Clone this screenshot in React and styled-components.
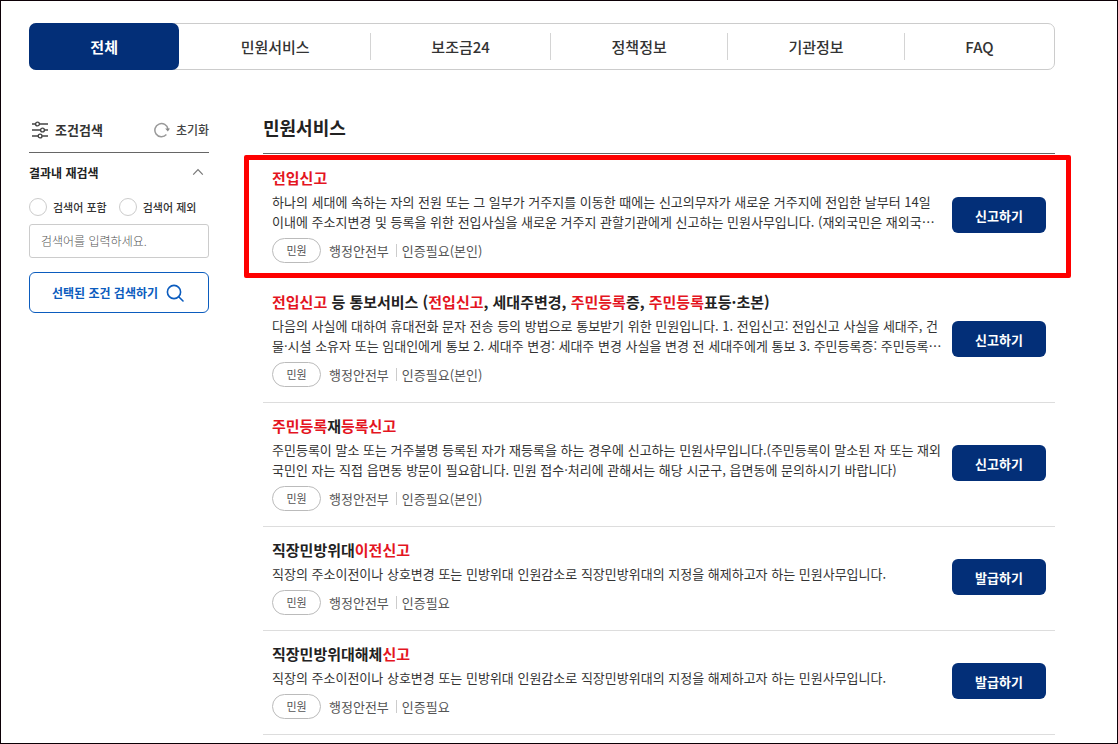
import React, { useState } from 'react';
import styled, { createGlobalStyle, css } from 'styled-components';

const GlobalStyle = createGlobalStyle`
  *, *::before, *::after {
    box-sizing: border-box;
  }

  body {
    margin: 0;
    background: #fff;
    color: #222;
    font-family: 'Noto Sans CJK KR', sans-serif;
  }

  button, input {
    font-family: inherit;
  }

  h1, h2, h3, p, ul {
    margin: 0;
    padding: 0;
  }

  ul {
    list-style: none;
  }
`

const Page = styled.div`
  min-height: 100vh;
  padding: 22px 62px 7px 28px;
  border: 1px solid #0c0006;
`

const TabList = styled.ul`
  display: flex;
  align-items: center;
  height: 47px;
  border: 1px solid #ccc;
  border-radius: 7px;
`

const TabItem = styled.li`
  flex: 1 1 auto;
  height: 27px;
  border-left: 1px solid ${({ $divided }) => ($divided ? '#d4d4d4' : 'transparent')};

  ${({ $active }) => $active && css`
    height: 47px;
    margin-left: -1px;
    border-left: 0;
  `}
`

const TabButton = styled.button`
  width: 100%;
  height: 100%;
  padding: 0 ${({ $active }) => ($active ? '1px' : '0')};
  border: 0;
  border-radius: 7px;
  background: ${({ $active }) => ($active ? '#032f78' : 'transparent')};
  color: ${({ $active }) => ($active ? '#fff' : '#333')};
  font-size: 15px;
  font-weight: ${({ $active }) => ($active ? 700 : 500)};
  cursor: pointer;
`

const Body = styled.div`
  display: flex;
  align-items: flex-start;
  gap: 54px;
  padding-top: 45px;
`

const Sidebar = styled.aside`
  flex: 0 0 180px;
`

const SidebarHead = styled.div`
  display: flex;
  align-items: center;
  justify-content: space-between;
  height: 38px;
  padding-bottom: 8px;
  border-bottom: 1px solid #666;
`

const SidebarTitle = styled.h2`
  display: flex;
  align-items: center;
  gap: 6px;
  padding-left: 2px;
  color: #333;
  font-size: 13px;
  font-weight: 700;
  line-height: 20px;
`

const ResetButton = styled.button`
  display: flex;
  align-items: center;
  gap: 6px;
  padding: 0;
  border: 0;
  background: none;
  color: #444;
  font-size: 12px;
  font-weight: 500;
  line-height: 20px;
  cursor: pointer;
`

const FoldButton = styled.button`
  display: flex;
  align-items: center;
  justify-content: space-between;
  width: 100%;
  height: 38px;
  padding: 0 5px 0 0;
  border: 0;
  background: none;
  color: #222;
  font-size: 12px;
  font-weight: 700;
  cursor: pointer;
`

const RadioRow = styled.div`
  display: flex;
  gap: 12px;
  padding: 7px 0 8px;
`

const RadioLabel = styled.label`
  display: flex;
  align-items: center;
  gap: 6px;
  height: 18px;
  color: #333;
  font-size: 11px;
  font-weight: 500;
  white-space: nowrap;
`

const Radio = styled.input`
  appearance: none;
  width: 18px;
  height: 18px;
  margin: 0;
  border: 1px solid #ccc;
  border-radius: 50%;
  background: #fff;

  &:checked {
    border: 5px solid #0b5cbe;
  }
`

const SearchInput = styled.input`
  display: block;
  width: 100%;
  height: 34px;
  padding: 0 11px 2px;
  border: 1px solid #ccc;
  border-radius: 3px;
  color: #333;
  font-size: 12px;

  &::placeholder {
    color: #555;
    font-weight: 300;
    opacity: 1;
  }
`

const SearchButton = styled.button`
  display: flex;
  align-items: center;
  justify-content: center;
  gap: 8px;
  width: 100%;
  height: 41px;
  margin-top: 14px;
  padding: 0 2px 0 0;
  border: 1px solid #0b5cbe;
  border-radius: 6px;
  background: #fff;
  color: #0b5cbe;
  font-size: 12px;
  font-weight: 700;
  cursor: pointer;
`

const Main = styled.main`
  flex: 1;
  min-width: 0;
`

const MainTitle = styled.h1`
  height: 39px;
  margin-bottom: 1px;
  border-bottom: 1px solid #666;
  color: #222;
  font-size: 18px;
  font-weight: 700;
  line-height: 24px;
`

const ServiceItem = styled.li`
  position: relative;
  display: flex;
  align-items: center;
  gap: 20px;
  padding: 12px 9px 15px;
  border-bottom: 1px solid ${({ $marked }) => ($marked ? 'transparent' : '#ddd')};

  ${({ $marked }) => $marked && css`
    &::after {
      content: '';
      position: absolute;
      inset: 0 -16px 0 -19px;
      border: 5px solid #fe0000;
      border-radius: 2px;
      pointer-events: none;
    }
  `}
`

const ServiceInfo = styled.div`
  flex: 1;
  min-width: 0;
`

const ServiceTitle = styled.h3`
  color: #222;
  font-size: 15px;
  font-weight: 700;
  line-height: 22px;

  em {
    color: #e4151f;
    font-style: normal;
  }
`

const ServiceText = styled.p`
  margin: 3px 0 6px;
  color: #333;
  font-size: 13px;
  line-height: 20px;
  white-space: pre;
`

const Meta = styled.div`
  display: flex;
  align-items: center;
  height: 25px;
  color: #555;
  font-size: 13px;
  line-height: 20px;
`

const Badge = styled.span`
  width: 49px;
  height: 25px;
  margin-right: 8px;
  border: 1px solid #bbb;
  border-radius: 13px;
  font-size: 11px;
  line-height: 23px;
  text-align: center;
`

const MetaDivider = styled.span`
  width: 1px;
  height: 13px;
  margin: 0 5px 0 7px;
  background: #ccc;
`

const ActionButton = styled.button`
  flex: 0 0 94px;
  height: 36px;
  padding: 0;
  border: 0;
  border-radius: 6px;
  background: #032f78;
  color: #fff;
  font-size: 13px;
  font-weight: 700;
  cursor: pointer;
`

const FilterIcon = () => (
  <svg width="18" height="18" viewBox="0 0 18 18" fill="none" stroke="#444" strokeWidth="1.4" aria-hidden="true">
    <path d="M1 3h3.4M8.6 3H17M1 9h8.4M13.6 9H17M1 15h6M11.2 15H17" />
    <circle cx="6.5" cy="3" r="1.9" />
    <circle cx="11.5" cy="9" r="1.9" />
    <circle cx="9.1" cy="15" r="1.9" />
  </svg>
)

const ResetIcon = () => (
  <svg width="16" height="16" viewBox="0 0 16 16" fill="none" stroke="#999" strokeWidth="1.5" aria-hidden="true">
    <path d="M12.4 12.6A6.6 6.6 0 1 1 14 7.2" />
    <path d="M11.2 6.6h4.8l-2.2 3z" fill="#888" stroke="none" />
  </svg>
)

const ChevronIcon = ({ open }) => (
  <svg width="12" height="8" viewBox="0 0 12 8" fill="none" stroke="#777" strokeWidth="1.2" aria-hidden="true">
    <path d={open ? 'M1.2 6.6 6 1.6l4.8 5' : 'M1.2 1.4 6 6.4l4.8-5'} />
  </svg>
)

const SearchIcon = () => (
  <svg width="18" height="18" viewBox="0 0 18 18" fill="none" stroke="currentColor" strokeWidth="1.6" aria-hidden="true">
    <circle cx="8" cy="8" r="6.6" />
    <path d="M12.7 12.7 17 17" strokeLinecap="round" />
  </svg>
)

const tabs = ['전체', '민원서비스', '보조금24', '정책정보', '기관정보', 'FAQ'];

// Odd entries of a title are the matched keywords.
const services = [
  {
    title: ['', '전입신고'],
    text: [
      '하나의 세대에 속하는 자의 전원 또는 그 일부가 거주지를 이동한 때에는 신고의무자가 새로운 거주지에 전입한 날부터 14일',
      '이내에 주소지변경 및 등록을 위한 전입사실을 새로운 거주지 관할기관에게 신고하는 민원사무입니다. (재외국민은 재외국…',
    ],
    auth: '인증필요(본인)',
    action: '신고하기',
    marked: true,
  },
  {
    title: ['', '전입신고', ' 등 통보서비스 (', '전입신고', ', 세대주변경, ', '주민등록', '증, ', '주민등록', '표등·초본)'],
    text: [
      '다음의 사실에 대하여 휴대전화 문자 전송 등의 방법으로 통보받기 위한 민원입니다. 1. 전입신고: 전입신고 사실을 세대주, 건',
      '물·시설 소유자 또는 임대인에게 통보 2. 세대주 변경: 세대주 변경 사실을 변경 전 세대주에게 통보 3. 주민등록증: 주민등록…',
    ],
    auth: '인증필요(본인)',
    action: '신고하기',
  },
  {
    title: ['', '주민등록', '재', '등록신고'],
    text: [
      '주민등록이 말소 또는 거주불명 등록된 자가 재등록을 하는 경우에 신고하는 민원사무입니다.(주민등록이 말소된 자 또는 재외',
      '국민인 자는 직접 읍면동 방문이 필요합니다. 민원 접수·처리에 관해서는 해당 시군구, 읍면동에 문의하시기 바랍니다)',
    ],
    auth: '인증필요(본인)',
    action: '신고하기',
  },
  {
    title: ['직장민방위대', '이전신고'],
    text: ['직장의 주소이전이나 상호변경 또는 민방위대 인원감소로 직장민방위대의 지정을 해제하고자 하는 민원사무입니다.'],
    auth: '인증필요',
    action: '발급하기',
  },
  {
    title: ['직장민방위대해체', '신고'],
    text: ['직장의 주소이전이나 상호변경 또는 민방위대 인원감소로 직장민방위대의 지정을 해제하고자 하는 민원사무입니다.'],
    auth: '인증필요',
    action: '발급하기',
  },
];

const Tabs = ({ active, onSelect }) => (
  <nav>
    <TabList>
      {tabs.map((tab, index) => (
        <TabItem key={tab} $active={tab === active} $divided={index > 1}>
          <TabButton type="button" $active={tab === active} onClick={() => onSelect(tab)}>
            {tab}
          </TabButton>
        </TabItem>
      ))}
    </TabList>
  </nav>
)

const SearchFilter = () => {
  const [open, setOpen] = useState(true);
  const [mode, setMode] = useState('');
  const [keyword, setKeyword] = useState('');

  const handleReset = () => {
    setMode('');
    setKeyword('');
  };

  return (
    <Sidebar>
      <SidebarHead>
        <SidebarTitle><FilterIcon />조건검색</SidebarTitle>
        <ResetButton type="button" onClick={handleReset}><ResetIcon />초기화</ResetButton>
      </SidebarHead>
      <FoldButton type="button" aria-expanded={open} onClick={() => setOpen(!open)}>
        결과내 재검색
        <ChevronIcon open={open} />
      </FoldButton>
      {open && (
        <>
          <RadioRow>
            <RadioLabel>
              <Radio type="radio" name="mode" checked={mode === 'include'} onChange={() => setMode('include')} />
              검색어 포함
            </RadioLabel>
            <RadioLabel>
              <Radio type="radio" name="mode" checked={mode === 'exclude'} onChange={() => setMode('exclude')} />
              검색어 제외
            </RadioLabel>
          </RadioRow>
          <SearchInput
            type="text"
            aria-label="검색어"
            placeholder="검색어를 입력하세요."
            value={keyword}
            onChange={(e) => setKeyword(e.target.value)}
          />
        </>
      )}
      <SearchButton type="button">선택된 조건 검색하기<SearchIcon /></SearchButton>
    </Sidebar>
  )
}

const Service = ({ title, text, auth, action, marked }) => (
  <ServiceItem $marked={marked}>
    <ServiceInfo>
      <ServiceTitle>
        {title.map((part, index) => (index % 2 ? <em key={index}>{part}</em> : part))}
      </ServiceTitle>
      <ServiceText>{text.join('\n')}</ServiceText>
      <Meta>
        <Badge>민원</Badge>
        <span>행정안전부</span>
        <MetaDivider />
        <span>{auth}</span>
      </Meta>
    </ServiceInfo>
    <ActionButton type="button">{action}</ActionButton>
  </ServiceItem>
)

const App = () => {
  const [tab, setTab] = useState('전체');

  return (
    <Page lang="ko">
      <GlobalStyle />
      <Tabs active={tab} onSelect={setTab} />
      <Body>
        <SearchFilter />
        <Main>
          <MainTitle>민원서비스</MainTitle>
          <ul>
            {services.map((service) => (
              <Service key={service.title.join('')} {...service} />
            ))}
          </ul>
        </Main>
      </Body>
    </Page>
  )
}

export default App;
